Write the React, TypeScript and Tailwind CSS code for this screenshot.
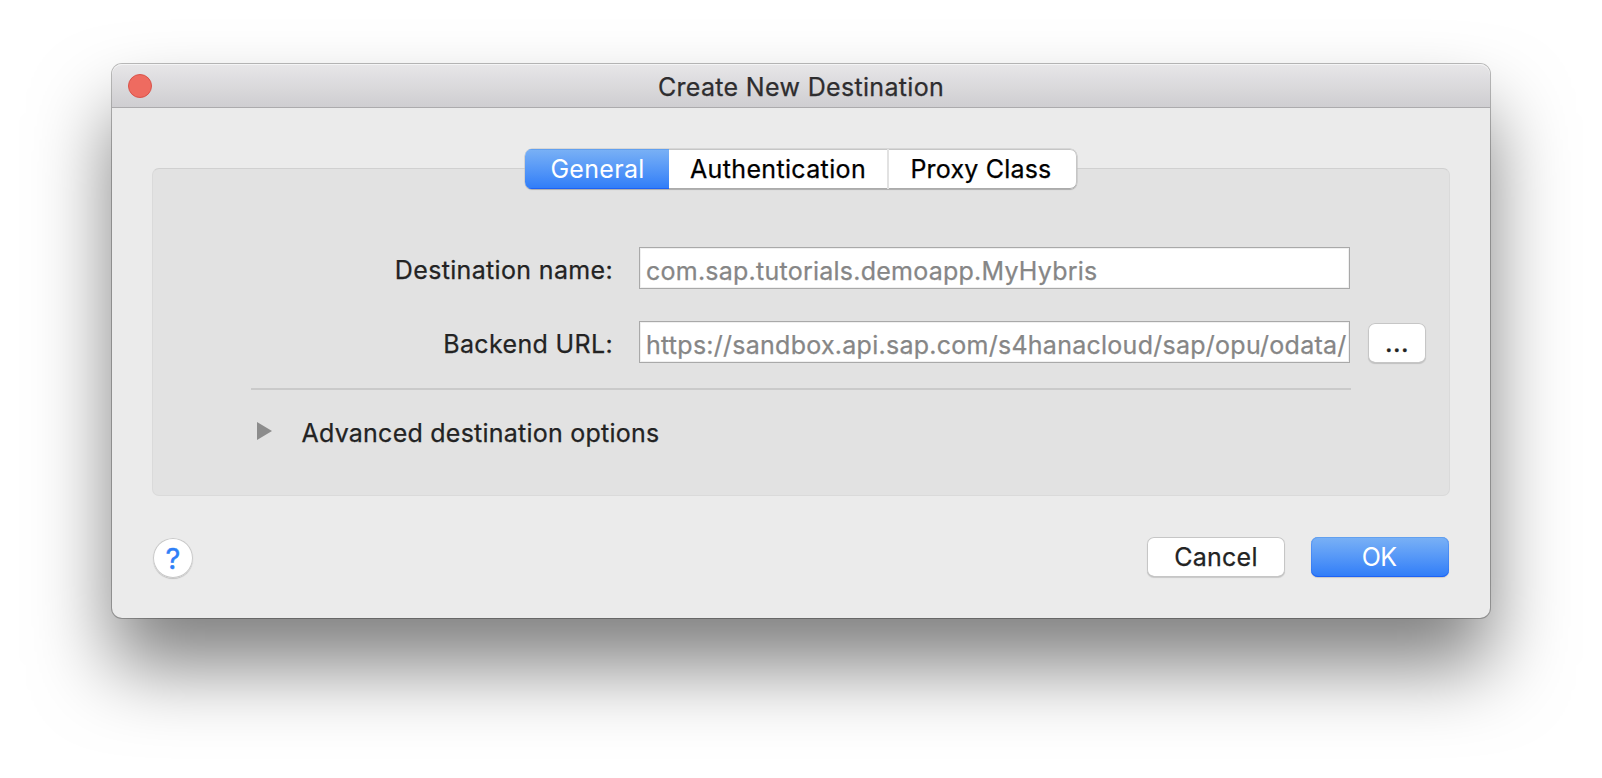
import type { ReactNode } from "react";

function PushButton({ children, primary = false, className = "" }: { children: ReactNode; primary?: boolean; className?: string }) {
  const look = primary
    ? "text-white bg-linear-to-b from-[#7ab1f5] to-[#2f7cf8] shadow-[0_1px_1px_rgba(0,0,0,0.15),inset_0_1px_0_#62a0ef,inset_0_-1px_0_#1e62f5,inset_1px_0_0_rgba(40,110,240,0.35),inset_-1px_0_0_rgba(40,110,240,0.35)]"
    : "text-[#232323] bg-white [-webkit-text-stroke:0.25px] shadow-[0_1px_1px_rgba(0,0,0,0.15),inset_0_0_0_1px_#c6c6c6,inset_0_-1px_0_#ababab]";
  return (
    <button type="button" className={`h-10 shrink-0 rounded-[7px] text-center leading-10 ${look} ${className}`}>
      {children}
    </button>
  );
}

function Field({ label, value, labelSpacing, valueSpacing, children }: { label: string; value: string; labelSpacing: string; valueSpacing: string; children?: ReactNode }) {
  return (
    <div className="flex h-[42px] items-start">
      <label className={`mr-[26px] w-[460px] text-right leading-[46px] text-[#232323] [-webkit-text-stroke:0.25px] ${labelSpacing}`}>{label}</label>
      <input
        readOnly
        value={value}
        className={`h-[42px] w-[711px] border border-[#a9a9a9] bg-white pt-[6px] text-[#868686] shadow-[inset_0_0_0_1px_#f0f0f0] outline-none [-webkit-text-stroke:0.25px] ${valueSpacing}`}
      />
      {children}
    </div>
  );
}

export default function App() {
  return (
    <main className="h-screen overflow-hidden bg-white pt-16 pl-28 font-[Inter,sans-serif] text-[25px]">
      <section className="flex h-[554px] w-[1378px] flex-col rounded-[10px] bg-[#ebebeb] shadow-[0_0_0_1px_rgba(0,0,0,0.26),0_48px_78px_rgba(0,0,0,0.5)]">
        <header className="flex h-11 shrink-0 items-start rounded-t-[10px] border-b border-[#acabad] bg-linear-to-b from-[#e7e6e8] to-[#cfced1] pl-4 shadow-[inset_0_1px_0_#f4f4f5]">
          <span className="mt-[10px] size-6 rounded-full border border-[#d9534a] bg-[#ee6b60]" />
          <h1 className="mr-10 flex-1 text-center leading-[46px] tracking-[0.33px] text-[#2e2d2f] [-webkit-text-stroke:0.25px]">Create New Destination</h1>
        </header>

        <nav className="relative z-10 mt-[41px] ml-[413px] flex h-10 w-[552px] shrink-0 overflow-hidden rounded-[7px] bg-white leading-10 text-black shadow-[0_1px_1px_rgba(0,0,0,0.18),0_0_0_0.5px_#c4c4c4]">
          <button type="button" className="w-36 bg-linear-to-b from-[#7ab1f5] to-[#2f7cf8] pl-px tracking-[0.3px] text-white shadow-[inset_0_1px_0_#62a0ef,inset_0_-1px_0_#1e62f5]">General</button>
          <button type="button" className="w-[220px] border-r-2 border-[#e2e2e2] tracking-[0.35px] shadow-[inset_0_1px_0_#c6c6c6,inset_0_-1px_0_#ababab] [-webkit-text-stroke:0.25px]">Authentication</button>
          <button type="button" className="flex-1 rounded-r-[7px] pr-1 tracking-[0.2px] shadow-[inset_0_1px_0_#c6c6c6,inset_0_-1px_0_#ababab,inset_-1px_0_0_#c6c6c6] [-webkit-text-stroke:0.25px]">Proxy Class</button>
        </nav>

        <div className="mx-10 -mt-[21px] h-[328px] shrink-0 rounded-[7px] border border-[#dadada] border-t-[#d0d0d0] bg-[#e2e2e2] pt-[78px]">
          <div className="flex flex-col gap-8">
            <Field label="Destination name:" value="com.sap.tutorials.demoapp.MyHybris" labelSpacing="tracking-[0.34px]" valueSpacing="pl-[6px] tracking-[0.24px]" />
            <Field label="Backend URL:" value="https://sandbox.api.sap.com/s4hanacloud/sap/opu/odata/" labelSpacing="tracking-[0.35px]" valueSpacing="pl-[6px] tracking-[0.26px]">
              <PushButton className="mt-0.5 ml-[18px] w-[58px] font-medium tracking-[0.4px]">...</PushButton>
            </Field>
          </div>
          <hr className="mt-[25px] ml-[98px] h-0.5 w-[1100px] border-0 bg-[#cacaca]" />
          <div className="mt-[23px] ml-[104px] flex h-10 items-start leading-10 tracking-[0.24px] text-[#232323] [-webkit-text-stroke:0.25px]">
            <svg className="mt-[9px] mr-[29.5px] shrink-0" width="15" height="18" viewBox="0 0 15 18">
              <path d="M0 0 15 9 0 18Z" fill="#8c8c8c" />
            </svg>
            Advanced destination options
          </div>
        </div>

        <footer className="mx-10 mt-[41px] flex pr-px">
          <button type="button" className="mt-px ml-px size-10 rounded-full bg-white text-center text-[29px] leading-[41px] text-[#2f7ff7] shadow-[0_1px_1px_rgba(0,0,0,0.18),inset_0_0_0_1px_#c9c9c9] [-webkit-text-stroke:0.4px]">?</button>
          <PushButton className="ml-auto w-[138px] tracking-[0.25px]">Cancel</PushButton>
          <PushButton primary className="ml-[26px] w-[138px] pr-0.5 tracking-[-0.7px]">OK</PushButton>
        </footer>
      </section>
    </main>
  );
}
